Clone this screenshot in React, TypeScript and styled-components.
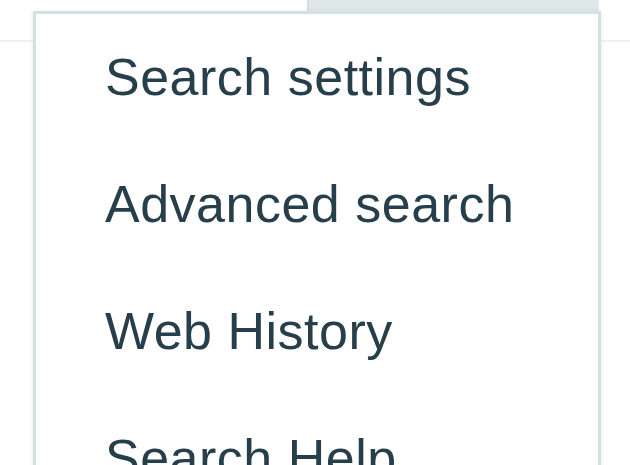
import styled, { createGlobalStyle } from 'styled-components';

const GlobalStyle = createGlobalStyle`
  html, body {
    margin: 0;
    padding: 0;
    background: #ffffff;
    overflow: hidden;
  }
`;

const StyledPage = styled.div`
  position: relative;
  width: 630px;
  height: 465px;
  overflow: hidden;
  background: #ffffff;
  font-family: 'Liberation Sans', Arial, sans-serif;
`;

const StyledHeader = styled.div`
  display: flex;
  justify-content: flex-end;
  height: 40px;
  padding-right: 31px;
  border-bottom: 2px solid #eef1f1;
`;

const StyledGearTab = styled.div`
  width: 290px;
  height: 13px;
  background: #dfe7e8;
  border-left: 2px solid #d3dedf;
`;

const StyledMenu = styled.ul`
  position: absolute;
  top: 11px;
  left: 33px;
  width: 568px;
  height: 470px;
  margin: 0;
  padding: 0 0 0 69px;
  list-style: none;
  background: #ffffff;
  border: 3px solid #d3e1e2;
  box-shadow: 0 1px 4px rgba(160, 190, 190, 0.35);
  box-sizing: border-box;
`;

const StyledItem = styled.li`
  padding: 34px 0 34px;
  line-height: 59px;
  font-size: 52px;
  letter-spacing: 0.5px;
  color: #263f4a;
  white-space: nowrap;
`;

const items = ['Search settings', 'Advanced search', 'Web History', 'Search Help'];

export default function App() {
  return (
    <>
      <GlobalStyle />
      <StyledPage>
        <StyledHeader>
          <StyledGearTab />
        </StyledHeader>
        <StyledMenu>
          {items.map((item) => (
            <StyledItem key={item}>{item}</StyledItem>
          ))}
        </StyledMenu>
      </StyledPage>
    </>
  );
}
